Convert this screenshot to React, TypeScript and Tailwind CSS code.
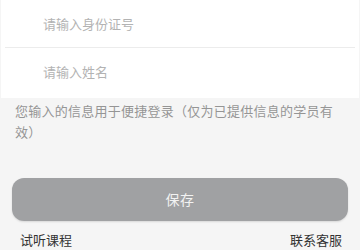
export default function App() {
  return (
    <div
      className="w-[360px] h-[250px] overflow-hidden bg-[#f5f5f5] flex flex-col"
      style={{ fontFamily: '"Noto Sans CJK SC", "Noto Sans", sans-serif' }}
    >
      <div className="mx-px bg-white">
        <div className="h-[47px] flex items-center">
          <input
            type="text"
            placeholder="请输入身份证号"
            className="w-full pl-[42px] pr-4 text-[13px] bg-transparent outline-none text-[#333] placeholder:text-[#b3b3b3]"
          />
        </div>
        <div className="mx-[4px] h-px bg-[#ececec]" />
        <div className="h-[50px] flex items-center pb-[3px]">
          <input
            type="text"
            placeholder="请输入姓名"
            className="w-full pl-[42px] pr-4 text-[13px] bg-transparent outline-none text-[#333] placeholder:text-[#b3b3b3]"
          />
        </div>
      </div>

      <p className="mt-[2px] pl-[15px] pr-[23px] text-[13px] leading-[21px] tracking-[0.25px] text-[#959595]">
        您输入的信息用于便捷登录（仅为已提供信息的学员有效）
      </p>

      <button className="mt-[36px] mx-[12px] h-[45px] rounded-[12px] bg-[#a0a1a3] shadow-[0_1px_2px_rgba(0,0,0,0.12)] text-[14px] text-[#f2f2f2] tracking-[0.5px]">
        保存
      </button>

      <div className="mt-[9px] pl-[20px] pr-[18px] flex justify-between text-[13px] leading-[20px] text-[#333]">
        <span>试听课程</span>
        <span>联系客服</span>
      </div>
    </div>
  );
}
